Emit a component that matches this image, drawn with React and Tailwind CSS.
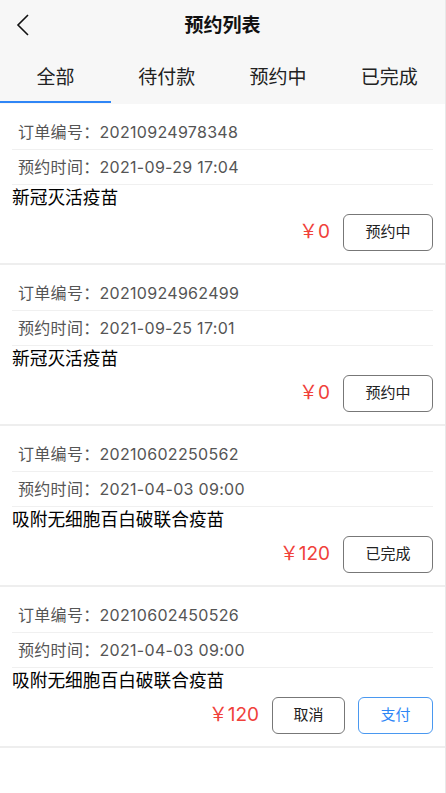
import React from "react";

const tabs = ["全部", "待付款", "预约中", "已完成"];

const orders = [
  { no: "20210924978348", time: "2021-09-29 17:04", name: "新冠灭活疫苗", price: "0", status: "预约中" },
  { no: "20210924962499", time: "2021-09-25 17:01", name: "新冠灭活疫苗", price: "0", status: "预约中" },
  { no: "20210602250562", time: "2021-04-03 09:00", name: "吸附无细胞百白破联合疫苗", price: "120", status: "已完成" },
  { no: "20210602450526", time: "2021-04-03 09:00", name: "吸附无细胞百白破联合疫苗", price: "120", pay: true },
];

function OrderCard({ order }) {
  return (
    <div className="bg-white border-b-2 border-[#eeeeee] pt-[11px] pb-[12px]">
      <div className="mx-3 h-[35px] flex items-center pl-1.5 border-b border-[#f0f0f0] text-[16px] tracking-[0.3px] text-[#555]">
        订单编号：{order.no}
      </div>
      <div className="mx-3 h-[35px] flex items-center pl-1.5 border-b border-[#f0f0f0] text-[16px] tracking-[0.3px] text-[#555]">
        预约时间：{order.time}
      </div>
      <div className="px-3 h-[26px] flex items-center text-[17.7px] text-black">{order.name}</div>
      <div className="mt-[3px] px-3 flex items-center justify-end">
        <span className="text-[#f0413a] text-[19px] mr-[13px]">￥{order.price}</span>
        {order.pay ? (
          <div className="flex gap-[13px]">
            <button className="w-[73px] h-[37px] rounded-[6px] border border-[#777] text-[15px] text-[#222]">取消</button>
            <button className="w-[75px] h-[37px] rounded-[6px] border border-[#4a98f0] text-[15px] text-[#2f86f6]">支付</button>
          </div>
        ) : (
          <button className="w-[90px] h-[37px] rounded-[6px] border border-[#777] text-[15px] text-[#222]">
            {order.status}
          </button>
        )}
      </div>
    </div>
  );
}

export default function App() {
  return (
    <div
      className="min-h-[793px] bg-white border-r border-[#e8e8e8]"
      style={{ fontFamily: 'Inter, "Noto Sans CJK SC", sans-serif' }}
    >
      <div className="bg-[#f7f7f7]">
        <div className="relative h-[52px] flex items-center justify-center">
          <svg className="absolute left-[14px] top-[13px]" width="18" height="24" viewBox="0 0 18 24" fill="none">
            <polyline points="14,2 4,12 14,22" stroke="#111" strokeWidth="1.6" />
          </svg>
          <span className="text-[19px] font-bold text-[#111]">预约列表</span>
        </div>
        <div className="grid grid-cols-4 h-[52px]">
          {tabs.map((t, i) => (
            <div key={t} className="relative flex items-center justify-center text-[19px] text-[#222]">
              {t}
              {i === 0 && <div className="absolute left-0 right-0 bottom-[1px] h-[2px] bg-[#2f86f6]" />}
            </div>
          ))}
        </div>
      </div>
      {orders.map((o) => (
        <OrderCard key={o.no} order={o} />
      ))}
    </div>
  );
}
